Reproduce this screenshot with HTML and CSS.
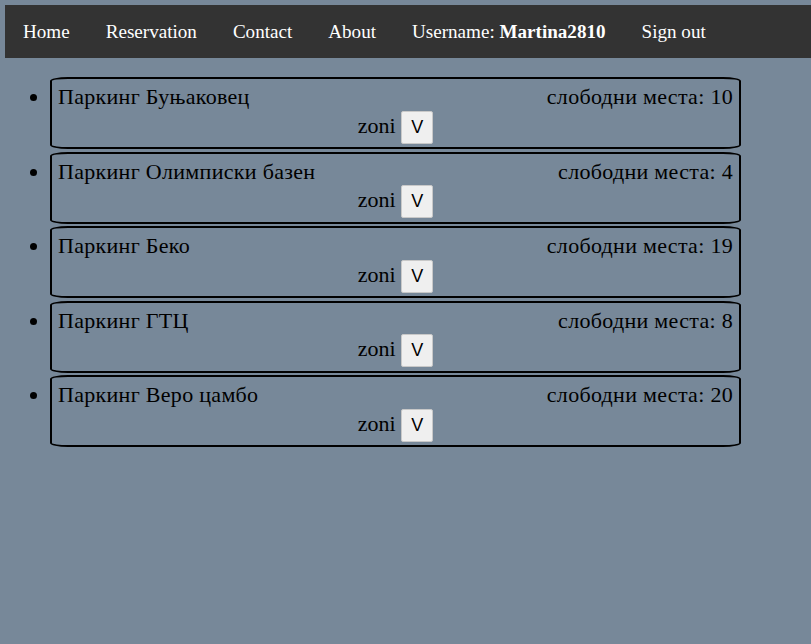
FILE: index.html
```html
<!DOCTYPE html>
<html>
<head>
<meta charset="utf-8">
<title>Паркинг</title>
<link rel="stylesheet" href="styles.css">
</head>
<body>
<nav class="topnav">
  <a class="nav-link" href="#">Home</a>
  <a class="nav-link" href="#">Reservation</a>
  <a class="nav-link" href="#">Contact</a>
  <a class="nav-link" href="#">About</a>
  <span class="nav-link">Username: <b>Martina2810</b></span>
  <a class="nav-link" href="#">Sign out</a>
</nav>
<ul class="parking-list">
  <li class="parking-item">
    <div class="card">
      <div class="card-top"><span>Паркинг Буњаковец</span><span>слободни места: 10</span></div>
      <div class="card-zones">zoni <button class="zone-btn">V</button></div>
    </div>
  </li>
  <li class="parking-item">
    <div class="card">
      <div class="card-top"><span>Паркинг Олимписки базен</span><span>слободни места: 4</span></div>
      <div class="card-zones">zoni <button class="zone-btn">V</button></div>
    </div>
  </li>
  <li class="parking-item">
    <div class="card">
      <div class="card-top"><span>Паркинг Беко</span><span>слободни места: 19</span></div>
      <div class="card-zones">zoni <button class="zone-btn">V</button></div>
    </div>
  </li>
  <li class="parking-item">
    <div class="card">
      <div class="card-top"><span>Паркинг ГТЦ</span><span>слободни места: 8</span></div>
      <div class="card-zones">zoni <button class="zone-btn">V</button></div>
    </div>
  </li>
  <li class="parking-item">
    <div class="card">
      <div class="card-top"><span>Паркинг Веро цамбо</span><span>слободни места: 20</span></div>
      <div class="card-zones">zoni <button class="zone-btn">V</button></div>
    </div>
  </li>
</ul>
</body>
</html>
```
FILE: styles.css
```css
html, body {
  margin: 0;
  padding: 0;
}
body {
  background: #778899;
  font-family: "Liberation Serif", "Times New Roman", serif;
  color: #000;
  overflow: hidden;
}
.topnav {
  display: flex;
  margin: 5px 0 0 5px;
  background: #333333;
}
.nav-link {
  display: block;
  padding: 15.5px 18px;
  font-size: 19.1px;
  color: #fff;
  text-decoration: none;
  white-space: nowrap;
}
.parking-list {
  margin: 19px 0 0;
  padding: 0 0 0 50px;
  font-size: 22px;
}
.parking-item {
  margin-bottom: 2.5px;
}
.card {
  width: 691px;
  box-sizing: border-box;
  height: 72px;
  border: 2px solid #000;
  border-radius: 18px / 4px;
  padding: 5px 6px 4px;
}
.card-top {
  display: flex;
  justify-content: space-between;
  line-height: 25px;
  letter-spacing: 0.3px;
}
.card-zones {
  text-align: center;
  padding-top: 1.5px;
}
.zone-btn {
  font-family: "Liberation Sans", Arial, sans-serif;
  font-size: 18px;
  padding: 5px 9px;
  margin: 0;
  background: #efefef;
  border: 1px solid #c8c8c8;
  border-radius: 2px;
  color: #000;
}
```
